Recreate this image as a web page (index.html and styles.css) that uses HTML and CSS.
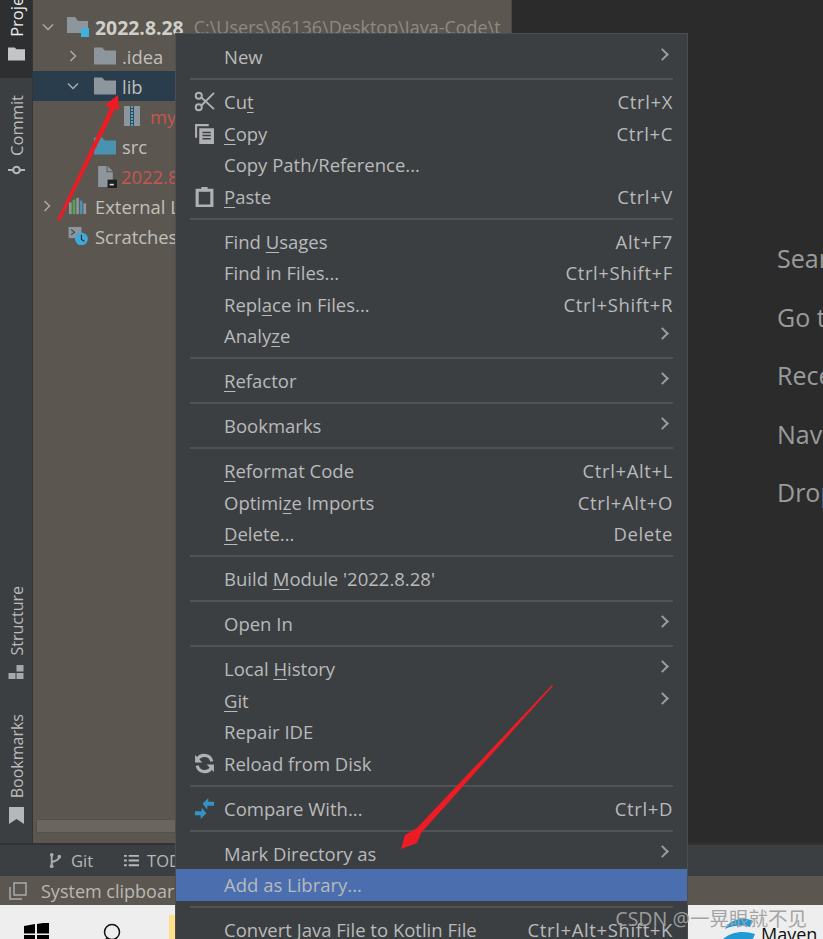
FILE: index.html
```html
<!DOCTYPE html>
<html lang="en">
<head>
<meta charset="utf-8">
<title>IDE context menu</title>
<link rel="stylesheet" href="styles.css">
</head>
<body>
<div class="app">
  <div class="main">
    <aside class="strip">
      <div class="strip-top">
        <div class="tab active">
          <svg class="tab-icon" viewBox="0 0 18 14"><path d="M0 0h7l2 2h9v12H0z" fill="#c5c5c5"/></svg>
          <span class="vtext">Project</span>
        </div>
        <div class="tab">
          <svg class="tab-icon" viewBox="0 0 18 14"><circle cx="9" cy="7" r="3.5" fill="none" stroke="#b5b8ba" stroke-width="2.2"/><path d="M0 7h5.5M12.5 7H18" stroke="#b5b8ba" stroke-width="2"/></svg>
          <span class="vtext">Commit</span>
        </div>
      </div>
      <div class="strip-bottom">
        <div class="tab">
          <svg class="tab-icon" viewBox="0 0 16 14"><path d="M0 8h7v6H0zM8 8h7v6H8zM8 0h7v6.500H8z" fill="#a6a9ab"/></svg>
          <span class="vtext">Structure</span>
        </div>
        <div class="tab">
          <svg class="tab-icon tab-icon-tall" viewBox="0 0 15 17"><path d="M0 0h15v17l-7.500-5L0 17z" fill="#b5b8ba"/></svg>
          <span class="vtext">Bookmarks</span>
        </div>
      </div>
    </aside>
    <section class="project">
      <div class="tree">
        <div class="row row-root">
          <svg class="chev" viewBox="0 0 12 12"><path d="M1 3.500l5 5 5-5" fill="none" stroke="#a8abad" stroke-width="1.500"/></svg>
          <svg class="ficon" viewBox="0 0 22 20"><path d="M0 0h8l3 4h10v12H0z" fill="#8d969c"/><rect x="14" y="11" width="9" height="9" fill="#3fb1de"/></svg>
          <b class="root-name">2022.8.28</b><span class="path">C:\Users\86136\Desktop\Java-Code\t</span>
        </div>
        <div class="row indent1">
          <svg class="chev" viewBox="0 0 12 12"><path d="M3.500 1l5 5-5 5" fill="none" stroke="#a8abad" stroke-width="1.500"/></svg>
          <svg class="ficon" viewBox="0 0 22 17"><path d="M0 0h8l3 3h11v14H0z" fill="#8d969c"/></svg>
          <span>.idea</span>
        </div>
        <div class="row indent1 selected">
          <svg class="chev" viewBox="0 0 12 12"><path d="M1 3.500l5 5 5-5" fill="none" stroke="#a8abad" stroke-width="1.500"/></svg>
          <svg class="ficon" viewBox="0 0 22 17"><path d="M0 0h8l3 3h11v14H0z" fill="#8d969c"/></svg>
          <span>lib</span>
        </div>
        <div class="row indent2">
          <svg class="ficon jar" viewBox="0 0 16 20"><rect width="16" height="20" fill="#8d969c"/><path d="M6 0h4v20H6z" fill="#3d4a52"/><path d="M7 1h2M7 4h2M7 7h2M7 10h2M7 13h2M7 16h2M7 19h2" stroke="#3fa9d8" stroke-width="2"/></svg>
          <span class="red">my</span>
        </div>
        <div class="row indent1 no-chev">
          <svg class="ficon" viewBox="0 0 22 17"><path d="M0 0h8l3 3h11v14H0z" fill="#4a93b0"/></svg>
          <span>src</span>
        </div>
        <div class="row indent1 no-chev">
          <svg class="ficon doc" viewBox="0 0 20 22"><path d="M2 1h8v6h6v14H2z" fill="#8d969c"/><path d="M11 1l5 5h-5z" fill="#8d969c"/><rect x="11" y="14" width="9" height="8" fill="#1f1f1f"/><rect x="13" y="18" width="4" height="1.500" fill="#ddd"/></svg>
          <span class="red">2022.8.28</span>
        </div>
        <div class="row row-ext">
          <svg class="chev" viewBox="0 0 12 12"><path d="M3.500 1l5 5-5 5" fill="none" stroke="#a8abad" stroke-width="1.500"/></svg>
          <svg class="ficon" viewBox="0 0 22 20"><path d="M1 6h3v13H1z" fill="#8d969c"/><path d="M5 3h3v16H5z" fill="#57a64a"/><path d="M9 1h3v18H9z" fill="#8d969c"/><path d="M13 4h3v15h-3z" fill="#4a93b0"/><path d="M17 7h3v12h-3z" fill="#8d969c"/></svg>
          <span>External Libraries</span>
        </div>
        <div class="row">
          <span class="chev-gap"></span>
          <svg class="ficon" viewBox="0 0 22 21"><path d="M0 0h15v13H0z" fill="#8d969c"/><path d="M3 3l4 3-4 3" fill="none" stroke="#4a4d4f" stroke-width="1.500"/><circle cx="15" cy="14" r="7.500" fill="#3fa9d8"/><path d="M15 9v5.500l3.500 2" fill="none" stroke="#2b2b2b" stroke-width="1.300"/></svg>
          <span>Scratches and Consoles</span>
        </div>
      </div>
      <div class="hscroll"></div>
    </section>
    <section class="editor">
      <p>Search Everywhere</p>
      <p>Go to File</p>
      <p>Recent Files</p>
      <p>Navigation Bar</p>
      <p>Drop files here to open them</p>
    </section>
  </div>
  <div class="toolbar">
    <span class="tool">
      <svg class="tool-icon" viewBox="0 0 14 18"><circle cx="3" cy="3" r="2" fill="#a8abad"/><circle cx="3" cy="15" r="2" fill="#a8abad"/><circle cx="11" cy="5" r="2" fill="#a8abad"/><path d="M3 3v12M3 12c0-3 8-2 8-7" fill="none" stroke="#a8abad" stroke-width="2"/></svg>
      Git
    </span>
    <span class="tool">
      <svg class="tool-icon" viewBox="0 0 16 14"><path d="M0 1h3v2H0zM5 1h11v2H5zM0 6h3v2H0zM5 6h11v2H5zM0 11h3v2H0zM5 11h11v2H5z" fill="#b5b8ba"/></svg>
      TODO
    </span>
  </div>
  <div class="status">
    <svg class="status-icon" viewBox="0 0 18 18"><path d="M5 1h12v12H5z" fill="none" stroke="#a8abad" stroke-width="1.500"/><path d="M1 5v12h12" fill="none" stroke="#a8abad" stroke-width="1.500"/></svg>
    <span>System clipboard</span>
  </div>
  <div class="taskbar">
    <svg class="win" viewBox="0 0 25 22"><path d="M0 3l11-2v9.500H0zM13 1l12-2v11.500H13zM0 12h11v9.500L0 20zM13 12h12v11l-12-2z" fill="#000"/></svg>
    <svg class="search" viewBox="0 0 20 22"><circle cx="10" cy="9" r="7.500" fill="none" stroke="#111" stroke-width="1.500"/><path d="M5 15l-4 5" stroke="#111" stroke-width="1.500"/></svg>
    <span class="folder-tab"></span>
    <span class="maven">
      <svg class="maven-icon" viewBox="0 0 34 34"><path d="M2 12C6 3 20-1 30 4l-3 6C18 7 9 9 2 12zM0 22c8-7 20-9 32-5l-3 7C20 21 10 23 3 28z" fill="#1f9ad6"/></svg>
      Maven
    </span>
  </div>

  <svg class="arrows" viewBox="0 0 823 939">
    <path d="M57 220L110 108 105 105 118 95 119 110 115 109 60 221z" fill="#ed1c24"/>
    <path d="M552 685L417 828 405 835 401 849 417 843 421 833 553 686z" fill="#ed1c24"/>
  </svg>

  <div class="menu">
    <div class="item"><span class="label">New</span><i class="more"></i></div>
    <hr>
    <div class="item">
      <svg class="micon" viewBox="0 0 22 22"><circle cx="5" cy="5" r="3.200" fill="none" stroke="#afb1b3" stroke-width="2"/><circle cx="5" cy="17" r="3.200" fill="none" stroke="#afb1b3" stroke-width="2"/><path d="M7.500 6.500L21 19M7.500 15.500L21 2" stroke="#afb1b3" stroke-width="2"/></svg>
      <span class="label">Cu<u>t</u></span><span class="key">Ctrl+X</span>
    </div>
    <div class="item">
      <svg class="micon" viewBox="0 0 20 20"><path d="M1 1h13v2H3v11H1z" fill="#afb1b3"/><path d="M5 5h14v15H5z" fill="#afb1b3"/><path d="M8 9h8M8 12h8M8 15h8" stroke="#3c3f41" stroke-width="1.400"/></svg>
      <span class="label"><u>C</u>opy</span><span class="key">Ctrl+C</span>
    </div>
    <div class="item"><span class="label">Copy Path/Reference...</span></div>
    <div class="item">
      <svg class="micon" viewBox="0 0 20 20"><path d="M3 4h14v15H3z" fill="none" stroke="#afb1b3" stroke-width="3"/><path d="M7 1h6v4H7z" fill="#afb1b3"/></svg>
      <span class="label"><u>P</u>aste</span><span class="key">Ctrl+V</span>
    </div>
    <hr>
    <div class="item"><span class="label">Find <u>U</u>sages</span><span class="key">Alt+F7</span></div>
    <div class="item"><span class="label">Find in Files...</span><span class="key">Ctrl+Shift+F</span></div>
    <div class="item"><span class="label">Repl<u>a</u>ce in Files...</span><span class="key">Ctrl+Shift+R</span></div>
    <div class="item"><span class="label">Analy<u>z</u>e</span><i class="more"></i></div>
    <hr>
    <div class="item"><span class="label"><u>R</u>efactor</span><i class="more"></i></div>
    <hr>
    <div class="item"><span class="label">Bookmarks</span><i class="more"></i></div>
    <hr>
    <div class="item"><span class="label"><u>R</u>eformat Code</span><span class="key">Ctrl+Alt+L</span></div>
    <div class="item"><span class="label">Optimi<u>z</u>e Imports</span><span class="key">Ctrl+Alt+O</span></div>
    <div class="item"><span class="label"><u>D</u>elete...</span><span class="key">Delete</span></div>
    <hr>
    <div class="item"><span class="label">Build <u>M</u>odule '2022.8.28'</span></div>
    <hr>
    <div class="item"><span class="label">Open In</span><i class="more"></i></div>
    <hr>
    <div class="item"><span class="label">Local <u>H</u>istory</span><i class="more"></i></div>
    <div class="item"><span class="label"><u>G</u>it</span><i class="more"></i></div>
    <div class="item"><span class="label">Repair IDE</span></div>
    <div class="item">
      <svg class="micon" viewBox="0 0 20 20"><path d="M17 8A7.500 7.500 0 0 0 3.500 5.500M3 12a7.500 7.500 0 0 0 13.500 2.500" fill="none" stroke="#afb1b3" stroke-width="3"/><path d="M1 2v7h7zM19 18v-7h-7z" fill="#afb1b3"/></svg>
      <span class="label">Reload from Disk</span>
    </div>
    <hr>
    <div class="item">
      <svg class="micon" viewBox="0 0 22 22"><path d="M21 4h-6V0l-6 6 5 6V8h7zM1 18h6v4l6-6-5-6v4H1z" fill="#3592c4"/></svg>
      <span class="label">Compare With...</span><span class="key">Ctrl+D</span>
    </div>
    <hr>
    <div class="item"><span class="label">Mark Directory as</span><i class="more"></i></div>
    <div class="item active"><span class="label">Add as Library...</span></div>
    <hr>
    <div class="item"><span class="label">Convert Java File to Kotlin File</span><span class="key">Ctrl+Alt+Shift+K</span></div>
  </div>
  <div class="watermark">CSDN @一晃眼就不见</div>
</div>
</body>
</html>
```
FILE: styles.css
```css
* { box-sizing: border-box; }
html, body { margin: 0; height: 100%; overflow: hidden; }
body { font-family: "Open Sans", "Noto Sans", "Noto Sans CJK SC", sans-serif; color: #bbbbbb; }
.app { position: relative; width: 823px; height: 939px; overflow: hidden; display: flex; flex-direction: column; background: #2b2b2b; }
.main { height: 843px; display: flex; }

.strip { width: 33px; background: #3c3f41; display: flex; flex-direction: column; justify-content: space-between; border-right: 1px solid #323436; font-size: 16.500px; padding-bottom: 19px; }
.strip-top { display: flex; flex-direction: column; }
.strip-bottom { display: flex; flex-direction: column; gap: 35px; font-size: 16px; }
.strip-bottom .tab { gap: 9px; }
.tab { display: flex; flex-direction: column-reverse; align-items: center; gap: 7px; width: 32px; }
.tab-icon { width: 17px; height: 14px; flex: none; }
.tab-icon-tall { height: 17px; }
.tab.active { background: #2d2f30; color: #eeeeee; padding: 0 0 17px; height: 78px; overflow: hidden; justify-content: flex-start; gap: 10px; }
.tab.active + .tab { margin-top: 17px; }
.vtext { writing-mode: vertical-rl; transform: rotate(180deg); line-height: 20px; white-space: nowrap; flex: none; position: relative; left: 1px; }

.project { width: 479px; background: #5c5650; display: flex; flex-direction: column; justify-content: space-between; border-right: 1px solid #4b4843; padding: 13px 0 2px; font-size: 18.400px; overflow: hidden; }
.tree { display: flex; flex-direction: column; }
.row { height: 30px; display: flex; align-items: center; padding-left: 9px; white-space: nowrap; color: #c0c0bc; }
.row.indent1 { padding-left: 34px; }
.row.indent2 { padding-left: 91px; }
.row.no-chev { padding-left: 61px; }
.row.selected { background: #2a3d4c; }
.row-root { height: 28px; }
.row-ext { padding-left: 8px; }
.chev { width: 12px; height: 12px; flex: none; margin-right: 15px; }
.chev-gap { width: 25px; flex: none; }
.ficon { width: 22px; height: 18px; flex: none; margin-right: 6px; }
.row-root .chev { margin-right: 13px; }
.row-root .ficon { height: 20px; }
.row-ext .chev { margin-right: 14px; }
.jar { width: 16px; height: 20px; margin-right: 10px; }
.doc { width: 21px; height: 23px; margin: 0 4px 0 2px; }
.row.no-chev .doc { margin-left: 2px; }
.root-name { font-weight: 700; font-size: 19.400px; color: #cfcfca; margin-right: 10px; }
.path { color: #8d8a85; font-size: 18px; }
.red { color: #c75450; }
.hscroll { height: 14px; margin: 0 0 8px 3px; background: #6a655f; border: 1px solid #55514b; }

.editor { flex: 1; padding: 242px 0 0 265px; background: #2b2b2b; font-size: 25px; color: #999b9d; overflow: hidden; white-space: nowrap; }
.editor p { margin: 0 0 26.500px; line-height: 32px; }

.toolbar { height: 33px; background: #3c3f41; border-top: 2px solid #323232; display: flex; align-items: center; gap: 31px; padding-left: 48px; font-size: 16.500px; color: #b5b8ba; }
.tool { display: inline-flex; align-items: center; gap: 8px; }
.tool-icon { width: 15px; height: 17px; }
.status { height: 29px; background: #5c5650; display: flex; align-items: center; gap: 14px; padding-left: 9px; font-size: 18px; color: #b9b9b4; white-space: nowrap; }
.status-icon { width: 18px; height: 18px; }
.taskbar { flex: 1; background: #eeeeee; display: flex; align-items: flex-end; position: relative; padding-left: 24px; }
.win { width: 25px; height: 22px; margin-bottom: -6px; flex: none; }
.search { width: 20px; height: 22px; margin: 0 0 -6px 53px; flex: none; }
.folder-tab { width: 10px; height: 24px; margin-left: 47px; background: #ffe08a; flex: none; }
.maven { margin-left: 544px; display: inline-flex; align-items: center; gap: 4px; color: #111; font-size: 18px; flex: none; margin-bottom: -12px; }
.maven-icon { width: 34px; height: 34px; }

.arrows { position: absolute; left: 0; top: 0; width: 823px; height: 939px; z-index: 3; pointer-events: none; }

.menu { position: absolute; left: 175px; top: 33px; width: 513px; padding-top: 7px; background: #3c3f41; border: 1px solid #4c4f51; border-bottom: 0; font-size: 18.500px; z-index: 2; }
.item { height: 31.500px; display: flex; align-items: center; padding: 0 14px 0 48px; position: relative; white-space: nowrap; color: #b8babb; }
.item.active { background: #4b6eaf; }
.label { flex: 1; }
.key { color: #b8babb; letter-spacing: .62px; }
.item u { text-underline-offset: 3px; }
.more { width: 9px; height: 9px; margin-right: 6px; border-top: 2px solid #9a9c9e; border-right: 2px solid #9a9c9e; transform: rotate(45deg); position: relative; top: -2px; }
.micon { position: absolute; left: 18px; top: 5px; width: 21px; height: 21px; }
.menu hr { margin: 5.750px 14px; height: 2px; border: 0; background: #505254; }

.watermark { position: absolute; right: 16px; bottom: 8px; font-size: 19.500px; line-height: 24px; color: rgba(160,160,160,.95); z-index: 4; white-space: nowrap; font-family: "Noto Sans", "Noto Sans CJK SC", sans-serif; }
```
